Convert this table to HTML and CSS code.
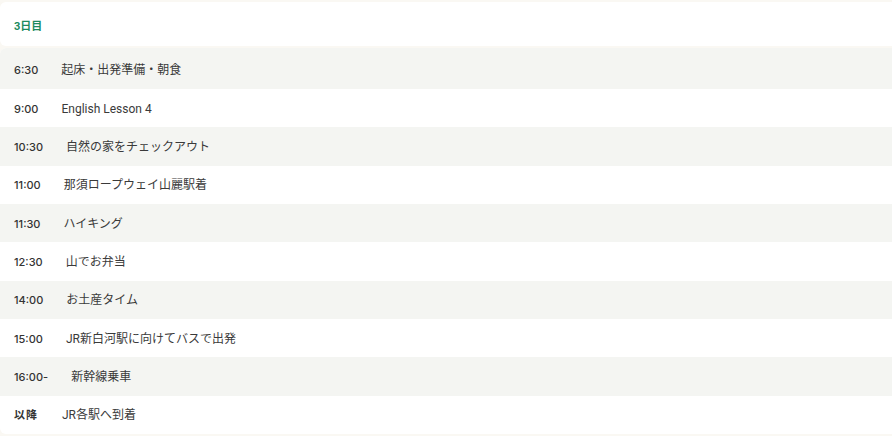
FILE: index.html
```html
<!DOCTYPE html>
<html lang="ja">
<head>
<meta charset="utf-8">
<title>3日目</title>
<link rel="stylesheet" href="styles.css">
</head>
<body>
<div class="page">
  <div class="day-card">
    <h2 class="day-title">3日目</h2>
  </div>
  <ul class="schedule">
    <li class="row"><span class="time">6:30</span><span class="act">起床・出発準備・朝食</span></li>
    <li class="row"><span class="time">9:00</span><span class="act">English Lesson 4</span></li>
    <li class="row"><span class="time">10:30</span><span class="act">自然の家をチェックアウト</span></li>
    <li class="row"><span class="time">11:00</span><span class="act">那須ロープウェイ山麗駅着</span></li>
    <li class="row"><span class="time">11:30</span><span class="act">ハイキング</span></li>
    <li class="row"><span class="time">12:30</span><span class="act">山でお弁当</span></li>
    <li class="row"><span class="time">14:00</span><span class="act">お土産タイム</span></li>
    <li class="row"><span class="time">15:00</span><span class="act">JR新白河駅に向けてバスで出発</span></li>
    <li class="row"><span class="time">16:00-</span><span class="act">新幹線乗車</span></li>
    <li class="row"><span class="time time-jp">以降</span><span class="act">JR各駅へ到着</span></li>
  </ul>
</div>
</body>
</html>
```

FILE: styles.css
```css
html, body {
  margin: 0;
  padding: 0;
  overflow: hidden;
}
body {
  background: #faf8f3;
  font-family: Roboto, "Noto Sans CJK JP", sans-serif;
  color: #333;
}
.page {
  margin-right: -12px;
  padding-top: 2px;
  display: flex;
  flex-direction: column;
  gap: 2px;
}
.day-card {
  background: #fff;
  border-radius: 6px;
  height: 44px;
  display: flex;
  align-items: center;
  padding: 0 14px;
}
.day-title {
  margin: 0;
  font-size: 11px;
  font-weight: 700;
  color: #1b8a5e;
  padding-top: 2px;
}
.schedule {
  list-style: none;
  margin: 0;
  padding: 0;
  background: #fff;
  border-radius: 6px;
  overflow: hidden;
}
.row {
  display: flex;
  align-items: center;
  box-sizing: border-box;
  height: 38.33px;
  padding: 1px 14px 0;
  font-size: 12px;
  line-height: 16px;
}
.row:nth-child(odd) {
  background: #f4f5f2;
}
.row:first-child {
  height: 41px;
  padding-top: 3px;
}
.time {
  font-family: Inter, "Noto Sans CJK JP", sans-serif;
  font-size: 11px;
  font-weight: 500;
  color: #333;
  margin-right: 23px;
}
.time-jp {
  font-weight: 700;
  letter-spacing: 1px;
  margin-right: 24px;
}
.act {
  font-weight: 400;
  color: #3a3a3a;
}
```
